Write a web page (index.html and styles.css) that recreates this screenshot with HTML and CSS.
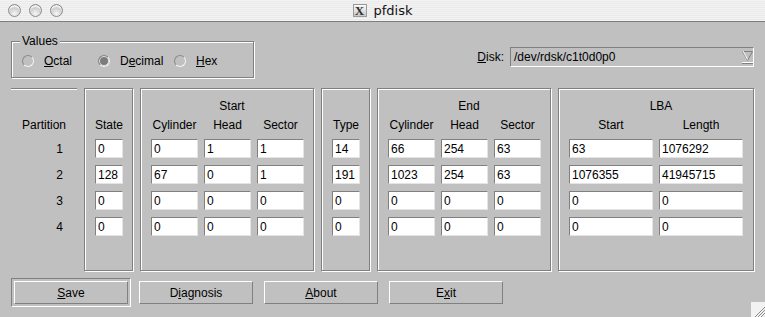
FILE: index.html
```html
<!DOCTYPE html>
<html lang="en">
<head>
    <meta charset="UTF-8">
    <title>pfdisk</title>
    <link rel="stylesheet" href="styles.css">
</head>
<body>
<div class="window">
    <div class="titlebar">
        <div class="lights">
            <span class="light"></span>
            <span class="light"></span>
            <span class="light"></span>
        </div>
        <div class="title"><span class="xicon">X</span>pfdisk</div>
        <div></div>
    </div>

    <div class="content">
        <div class="top">
            <fieldset class="values">
                <legend>Values</legend>
                <div class="radios">
                    <label class="radio"><span class="dot"></span><span><u>O</u>ctal</span></label>
                    <label class="radio"><span class="dot on"></span><span>D<u>e</u>cimal</span></label>
                    <label class="radio"><span class="dot"></span><span><u>H</u>ex</span></label>
                </div>
            </fieldset>

            <div class="disk">
                <span><u>D</u>isk:</span>
                <div class="combo">
                    <span>/dev/rdsk/c1t0d0p0</span>
                    <svg width="11" height="14" viewBox="0 0 11 14">
                        <polygon points="0.5,1.5 10.5,1.5 5.5,10.5" fill="none" stroke="#808080"/>
                        <line x1="1" y1="1" x2="5.5" y2="9.5" stroke="#fff"/>
                        <rect x="0" y="12" width="11" height="2" fill="#808080"/>
                        <rect x="0" y="12" width="11" height="1" fill="#fff"/>
                    </svg>
                </div>
            </div>
        </div>

        <div class="table">
            <div class="partition">
                <div class="ftitle"></div>
                <div class="fhead"><span>Partition</span></div>
                <div class="plabel">1</div>
                <div class="plabel">2</div>
                <div class="plabel">3</div>
                <div class="plabel">4</div>
            </div>

            <div class="frame w49">
                <div class="ftitle"></div>
                <div class="fhead"><span class="c28">State</span></div>
                <div class="frow"><input class="c28" value="0"></div>
                <div class="frow"><input class="c28" value="128"></div>
                <div class="frow"><input class="c28" value="0"></div>
                <div class="frow"><input class="c28" value="0"></div>
            </div>

            <div class="frame w174">
                <div class="ftitle">Start</div>
                <div class="fhead"><span class="c47">Cylinder</span><span class="c47">Head</span><span class="c47">Sector</span></div>
                <div class="frow"><input class="c47" value="0"><input class="c47" value="1"><input class="c47" value="1"></div>
                <div class="frow"><input class="c47" value="67"><input class="c47" value="0"><input class="c47" value="1"></div>
                <div class="frow"><input class="c47" value="0"><input class="c47" value="0"><input class="c47" value="0"></div>
                <div class="frow"><input class="c47" value="0"><input class="c47" value="0"><input class="c47" value="0"></div>
            </div>

            <div class="frame w49">
                <div class="ftitle"></div>
                <div class="fhead"><span class="c28">Type</span></div>
                <div class="frow"><input class="c28" value="14"></div>
                <div class="frow"><input class="c28" value="191"></div>
                <div class="frow"><input class="c28" value="0"></div>
                <div class="frow"><input class="c28" value="0"></div>
            </div>

            <div class="frame w174">
                <div class="ftitle">End</div>
                <div class="fhead"><span class="c47">Cylinder</span><span class="c47">Head</span><span class="c47">Sector</span></div>
                <div class="frow"><input class="c47" value="66"><input class="c47" value="254"><input class="c47" value="63"></div>
                <div class="frow"><input class="c47" value="1023"><input class="c47" value="254"><input class="c47" value="63"></div>
                <div class="frow"><input class="c47" value="0"><input class="c47" value="0"><input class="c47" value="0"></div>
                <div class="frow"><input class="c47" value="0"><input class="c47" value="0"><input class="c47" value="0"></div>
            </div>

            <div class="frame w196">
                <div class="ftitle">LBA</div>
                <div class="fhead"><span class="c84">Start</span><span class="c84">Length</span></div>
                <div class="frow"><input class="c84" value="63"><input class="c84" value="1076292"></div>
                <div class="frow"><input class="c84" value="1076355"><input class="c84" value="41945715"></div>
                <div class="frow"><input class="c84" value="0"><input class="c84" value="0"></div>
                <div class="frow"><input class="c84" value="0"><input class="c84" value="0"></div>
            </div>
        </div>

        <div class="buttons">
            <div class="default"><button><u>S</u>ave</button></div>
            <button>D<u>i</u>agnosis</button>
            <button><u>A</u>bout</button>
            <button>E<u>x</u>it</button>
        </div>
    </div>

    <svg class="grip" width="14" height="15" viewBox="0 0 14 15">
        <rect width="14" height="15" fill="#f2f2f2"/>
        <line x1="4" y1="15" x2="14" y2="5" stroke="#8a8a8a"/>
        <line x1="7" y1="15" x2="14" y2="8" stroke="#8a8a8a"/>
        <line x1="10" y1="15" x2="14" y2="11" stroke="#8a8a8a"/>
    </svg>
</div>
</body>
</html>
```

FILE: styles.css
```css
body {
    margin: 0;
    background: #c0c0c0;
    font-family: "Liberation Sans", Arial, sans-serif;
    font-size: 12px;
    color: #000;
}
.window {
    position: relative;
    width: 765px;
    height: 317px;
    overflow: hidden;
}
.titlebar {
    height: 21px;
    border-bottom: 1px solid #7d7d7d;
    background: repeating-linear-gradient(to bottom, #f3f3f3 0 1px, #eaeaea 1px 2px);
    display: grid;
    grid-template-columns: 1fr auto 1fr;
    align-items: center;
}
.lights {
    display: flex;
    gap: 8px;
    padding-left: 8px;
}
.light {
    width: 13px;
    height: 13px;
    box-sizing: border-box;
    border-radius: 50%;
    border: 1px solid #8c8c8c;
    background: radial-gradient(circle at 50% 80%, #f6f6f6 0, #d6d6d6 45%, #a9a9a9 100%);
    box-shadow: inset 0 2px 1px rgba(255,255,255,0.8);
}
.title {
    display: flex;
    align-items: center;
    gap: 7px;
    font-family: "DejaVu Sans", sans-serif;
    font-size: 13px;
    color: #111;
}
.xicon {
    width: 14px;
    height: 13px;
    box-sizing: border-box;
    border: 1px solid #9a9a9a;
    background: linear-gradient(#fafafa, #c8c8c8);
    font-family: "Liberation Serif", serif;
    font-weight: bold;
    font-size: 13px;
    line-height: 11px;
    text-align: center;
    color: #333;
}
.content {
    padding: 0 11px;
}
.top {
    height: 66px;
    display: flex;
    justify-content: space-between;
    align-items: flex-start;
}
.values {
    margin: 12px 0 0;
    padding: 4px 0 7px 8px;
    width: 243px;
    box-sizing: border-box;
    border: 1px solid #808080;
    box-shadow: inset 1px 1px 0 #fff, 1px 1px 0 #fff;
}
.values legend {
    padding: 0 2px;
    line-height: 14px;
    background: #c0c0c0;
}
.radios {
    display: flex;
    align-items: center;
    height: 18px;
    padding-left: 2px;
}
.radio {
    width: 76px;
    display: flex;
    align-items: center;
    gap: 10px;
}
.radio:last-child {
    width: auto;
}
.dot {
    width: 12px;
    height: 12px;
    box-sizing: border-box;
    border-radius: 50%;
    border: 1px solid;
    border-color: #8a8a8a #f4f4f4 #f4f4f4 #8a8a8a;
}
.dot.on {
    background: #7c7c7c;
    box-shadow: inset 0 0 0 1px #e2e2e2;
}
.disk {
    margin-top: 25px;
    display: flex;
    align-items: center;
    gap: 6px;
}
.combo {
    width: 244px;
    height: 20px;
    box-sizing: border-box;
    border: 1px solid;
    border-color: #808080 #fff #fff #808080;
    padding: 0 0 0 3px;
    display: flex;
    align-items: center;
    justify-content: space-between;
}
.table {
    display: flex;
    gap: 7px;
    height: 183px;
}
.partition {
    width: 66px;
    border-top: 1px solid #808080;
    box-shadow: inset 0 1px 0 #fff;
    padding-top: 9px;
}
.partition .fhead {
    justify-content: center;
}
.frame {
    box-sizing: border-box;
    border: 1px solid #808080;
    box-shadow: inset 1px 1px 0 #fff, 1px 1px 0 #fff;
    padding: 9px 0 0 10px;
}
.w49 { width: 49px; }
.w174 { width: 174px; }
.w196 { width: 196px; }
.ftitle {
    height: 19px;
    line-height: 16px;
    text-align: center;
}
.fhead {
    display: flex;
    gap: 6px;
    height: 22px;
    line-height: 16px;
}
.fhead span {
    text-align: center;
}
.frow {
    display: flex;
    gap: 6px;
    margin-bottom: 7px;
}
.plabel {
    width: 35px;
    margin-left: 31px;
    height: 26px;
    line-height: 19px;
    padding-top: 1px;
    box-sizing: border-box;
    text-align: center;
}
.c28 { width: 28px; }
.c47 { width: 47px; }
.c84 { width: 84px; }
input {
    height: 19px;
    box-sizing: border-box;
    margin: 0;
    padding: 0 2px;
    border: 1px solid;
    border-color: #808080 #e4e4e4 #e4e4e4 #808080;
    background: #fff;
    font-family: "Liberation Sans", Arial, sans-serif;
    font-size: 12px;
    color: #000;
    outline: none;
}
.buttons {
    margin-top: 7px;
    display: flex;
    align-items: center;
    gap: 11px;
}
.default {
    display: flex;
    padding: 2px;
    border: 1px solid;
    border-color: #808080 #fff #fff #808080;
    margin-right: -3px;
}
button {
    width: 114px;
    height: 23px;
    box-sizing: border-box;
    margin: 0;
    padding: 0;
    border: 1px solid;
    border-color: #fff #808080 #808080 #fff;
    background: #c0c0c0;
    font-family: "Liberation Sans", Arial, sans-serif;
    font-size: 12px;
    color: #000;
}
.grip {
    position: absolute;
    right: 0;
    bottom: 0;
}
```
